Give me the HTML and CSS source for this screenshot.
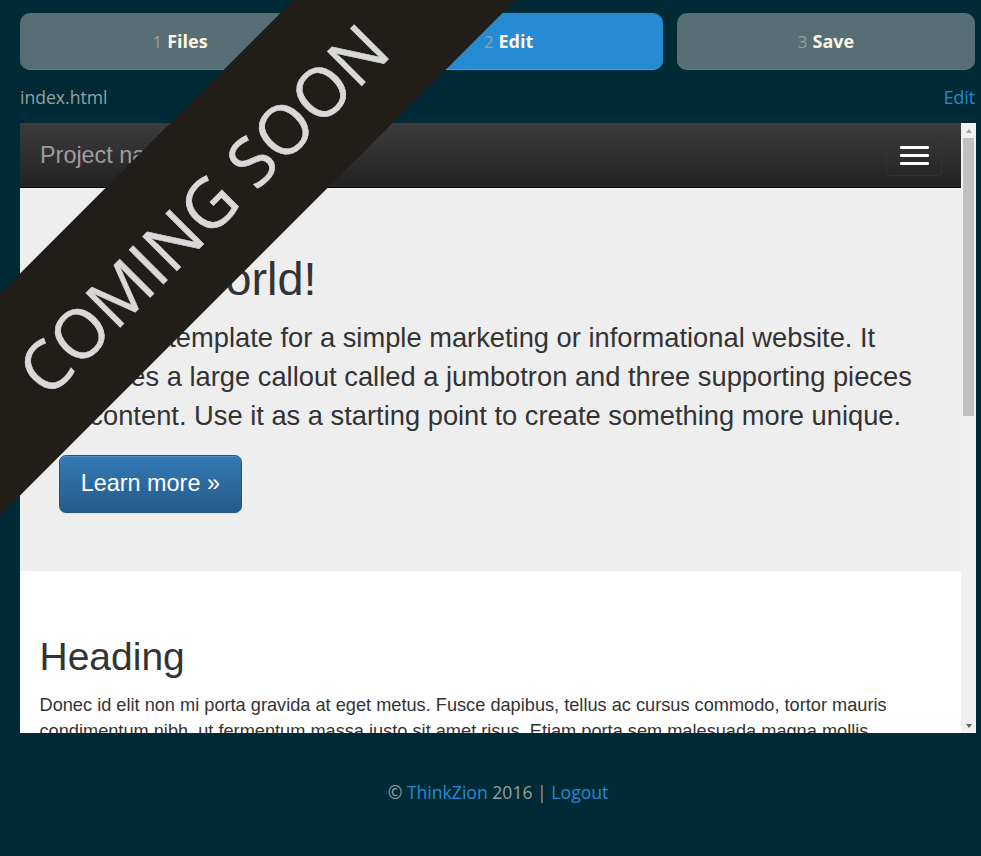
FILE: index.html
```html
<!DOCTYPE html>
<html lang="en">
<head>
<meta charset="utf-8">
<title>ThinkZion - Edit</title>
<link rel="stylesheet" href="styles.css">
</head>
<body>
<div class="app">
  <nav class="steps">
    <div class="step"><span class="num">1</span> <b>Files</b></div>
    <div class="step active"><span class="num">2</span> <b>Edit</b></div>
    <div class="step"><span class="num">3</span> <b>Save</b></div>
  </nav>
  <div class="filebar">
    <span class="filename">index.html</span>
    <a class="link" href="#">Edit</a>
  </div>
  <div class="preview">
    <div class="viewport">
      <div class="navbar">
        <span class="brand">Project name</span>
        <span class="toggle"><i></i><i></i><i></i></span>
      </div>
      <div class="jumbotron">
        <h1>Hello, world!</h1>
        <p>This is a template for a simple marketing or informational website. It includes a large callout called a jumbotron and three supporting pieces of content. Use it as a starting point to create something more unique.</p>
        <p class="cta"><a class="btn" href="#">Learn more &raquo;</a></p>
      </div>
      <div class="section">
        <h2>Heading</h2>
        <p>Donec id elit non mi porta gravida at eget metus. Fusce dapibus, tellus ac cursus commodo, tortor mauris condimentum nibh, ut fermentum massa justo sit amet risus. Etiam porta sem malesuada magna mollis euismod. Donec sed odio dui.</p>
      </div>
    </div>
    <div class="scrollbar">
      <span class="arrow up"></span>
      <span class="track"><span class="thumb"></span></span>
      <span class="arrow down"></span>
    </div>
  </div>
  <footer class="footer">&copy; <a class="link" href="#">ThinkZion</a> 2016 | <a class="link" href="#">Logout</a></footer>
</div>
<div class="ribbon"><span>COMING SOON</span></div>
</body>
</html>
```

FILE: styles.css
```css
html, body {
  margin: 0;
  padding: 0;
  overflow: hidden;
}
body {
  background: #002b36;
  width: 981px;
  height: 856px;
  position: relative;
  font-family: "Open Sans", "Noto Sans", sans-serif;
}
.app {
  padding: 13px 0 0 20px;
  width: 956px;
}
.steps {
  display: grid;
  grid-template-columns: 320px 309px 298px;
  column-gap: 14px;
}
.step {
  height: 57px;
  box-sizing: border-box;
  border-radius: 10px;
  background: #586e75;
  border-bottom: 1px solid #66797f;
  display: flex;
  align-items: center;
  justify-content: center;
  gap: 5px;
  font-size: 18px;
  color: #fdf6e3;
}
.step.active {
  background: #268bd2;
  border-bottom-color: #4aa0de;
}
.step .num {
  color: #93a1a1;
  font-weight: 400;
  font-size: 17px;
}
.step b {
  font-weight: 700;
}
.filebar {
  height: 53px;
  display: flex;
  align-items: center;
  justify-content: space-between;
  font-size: 17.6px;
  padding-right: 1px;
}
.filename {
  color: #93a1a1;
}
.link {
  color: #268bd2;
  text-decoration: none;
}
.preview {
  display: flex;
  height: 610px;
  background: #fff;
}
.viewport {
  flex: 1;
  overflow: hidden;
  font-family: "Liberation Sans", Arial, sans-serif;
  color: #333;
}
.navbar {
  height: 65px;
  box-sizing: border-box;
  border-bottom: 1px solid #080808;
  background: linear-gradient(to bottom, #3c3c3c 0%, #222 100%);
  display: flex;
  align-items: center;
  justify-content: space-between;
  padding: 0 19px 0 20px;
}
.brand {
  color: #9d9d9d;
  font-size: 23.4px;
}
.toggle {
  width: 56px;
  height: 41px;
  box-sizing: border-box;
  border: 1px solid #333;
  border-radius: 5px;
  display: flex;
  flex-direction: column;
  align-items: center;
  justify-content: center;
  gap: 5px;
}
.toggle i {
  display: block;
  width: 29px;
  height: 3px;
  border-radius: 1px;
  background: #fff;
}
.jumbotron {
  background: #eee;
  padding: 40px 39px 39px 39px;
}
.jumbotron h1 {
  margin: 26px 0 13px;
  font-size: 46.8px;
  line-height: 1.1;
  font-weight: 400;
  color: #333;
}
.jumbotron p {
  margin: 0 0 19.5px;
  font-size: 27.3px;
  line-height: 39px;
}
.jumbotron p.cta {
  display: flex;
  margin-bottom: 18.5px;
}
.btn {
  display: inline-block;
  color: #fff;
  text-decoration: none;
  font-size: 23.4px;
  line-height: 31.2px;
  padding: 12.5px 20.8px;
  border: 1px solid #245580;
  border-radius: 7px;
  background: linear-gradient(to bottom, #337ab7 0%, #265a88 100%);
  box-shadow: inset 0 1px 0 rgba(255,255,255,.15), 0 1px 1px rgba(0,0,0,.075);
}
.section {
  padding: 39px 19.5px 0;
}
.section h2 {
  margin: 26px 0 13px;
  font-size: 39px;
  line-height: 1.1;
  font-weight: 400;
  color: #333;
}
.section p {
  margin: 0;
  font-size: 18.2px;
  line-height: 26px;
}
.scrollbar {
  width: 15px;
  background: #f0f0f0;
  display: flex;
  flex-direction: column;
  align-items: center;
}
.arrow {
  height: 15px;
  width: 15px;
  display: flex;
  align-items: center;
  justify-content: center;
}
.arrow::before {
  content: "";
  border-left: 3.5px solid transparent;
  border-right: 3.5px solid transparent;
}
.arrow.up::before {
  border-bottom: 4px solid #a3a3a3;
}
.arrow.down::before {
  border-top: 4px solid #606060;
}
.track {
  flex: 1;
  width: 15px;
  display: flex;
  justify-content: center;
}
.thumb {
  display: block;
  width: 11px;
  height: 278px;
  background: #c1c1c1;
}
.footer {
  margin-top: 47px;
  text-align: center;
  font-size: 17.6px;
  line-height: 24px;
  color: #93a1a1;
}
.ribbon {
  position: absolute;
  left: -301px;
  top: 126.5px;
  width: 1000px;
  height: 157px;
  background: #211e19;
  transform: rotate(-45deg);
  display: flex;
  align-items: center;
  justify-content: center;
  box-sizing: border-box;
  padding-top: 8px;
}
.ribbon span {
  font-family: "Open Sans", "Noto Sans", sans-serif;
  font-size: 68px;
  color: #d9d9d9;
  line-height: 1;
  white-space: nowrap;
  -webkit-text-stroke: 0.6px #d9d9d9;
}
```
